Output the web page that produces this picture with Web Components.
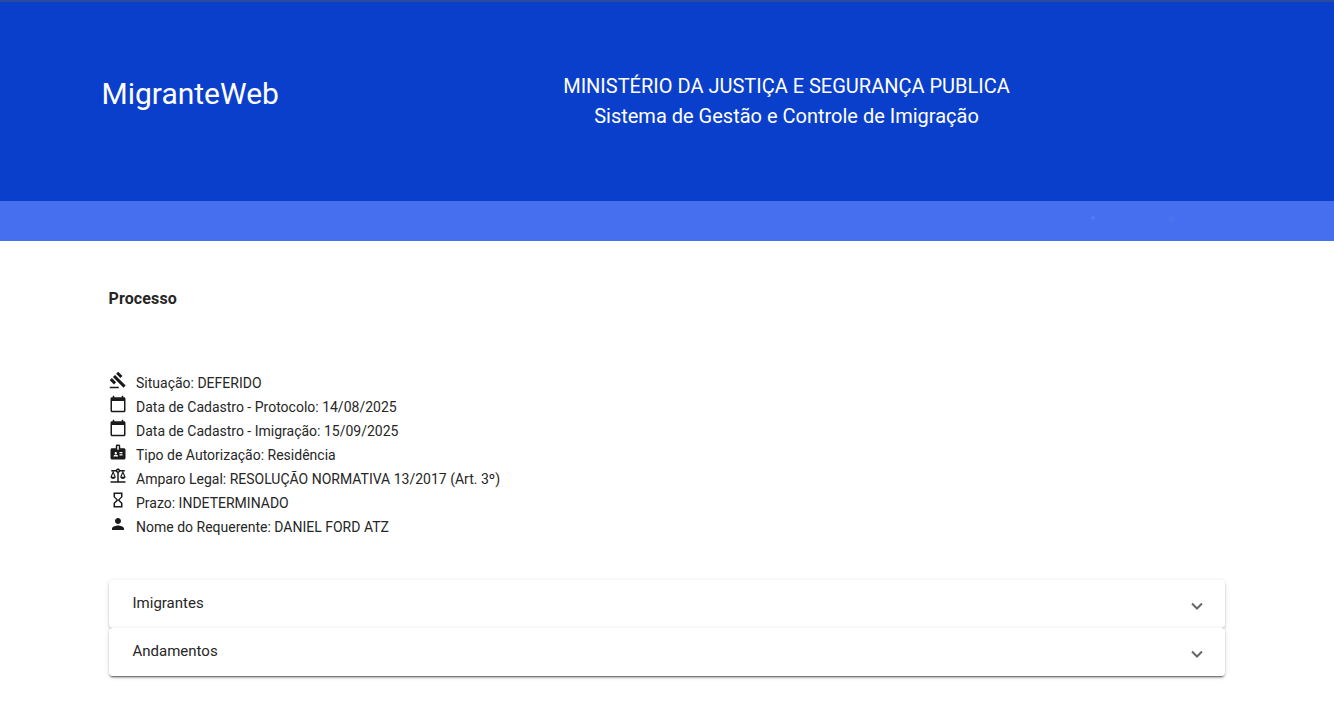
<!DOCTYPE html>
<html lang="pt-BR">
<head>
<meta charset="utf-8">
<title>MigranteWeb</title>
<style>
    html, body { margin: 0; padding: 0; background: #fff; }
    body { font-family: Roboto, "Liberation Sans", sans-serif; color: rgba(0,0,0,.87); }
</style>
</head>
<body>
<app-header title-text="MigranteWeb" line1="MINISTÉRIO DA JUSTIÇA E SEGURANÇA PUBLICA" line2="Sistema de Gestão e Controle de Imigração"></app-header>
<process-view heading="Processo">
    <info-row icon="gavel">Situação: DEFERIDO</info-row>
    <info-row icon="calendar">Data de Cadastro - Protocolo: 14/08/2025</info-row>
    <info-row icon="calendar">Data de Cadastro - Imigração: 15/09/2025</info-row>
    <info-row icon="badge">Tipo de Autorização: Residência</info-row>
    <info-row icon="balance">Amparo Legal: RESOLUÇÃO NORMATIVA 13/2017 (Art. 3º)</info-row>
    <info-row icon="hourglass">Prazo: INDETERMINADO</info-row>
    <info-row icon="person">Nome do Requerente: DANIEL FORD ATZ</info-row>
    <expansion-panels slot="panels">
        <expansion-panel label="Imigrantes"></expansion-panel>
        <expansion-panel label="Andamentos"></expansion-panel>
    </expansion-panels>
</process-view>

<script>
const ICONS = {
    gavel: 'M1 21h12v2H1zM5.245 8.07l2.83-2.827 14.14 14.142-2.828 2.828zM12.317 1l5.657 5.656-2.83 2.83-5.654-5.66zM3.825 9.485l5.657 5.657-2.828 2.828-5.657-5.657z',
    calendar: 'M20 3h-1V1h-2v2H7V1H5v2H4c-1.1 0-2 .9-2 2v16c0 1.1.9 2 2 2h16c1.1 0 2-.9 2-2V5c0-1.1-.9-2-2-2zm0 18H4V8h16v13z',
    badge: 'M20 7h-5V4c0-1.1-.9-2-2-2h-2c-1.1 0-2 .9-2 2v3H4c-1.1 0-2 .9-2 2v11c0 1.1.9 2 2 2h16c1.1 0 2-.9 2-2V9c0-1.1-.9-2-2-2zM9 12c.83 0 1.5.67 1.5 1.5S9.83 15 9 15s-1.5-.67-1.5-1.5S8.17 12 9 12zm3 6H6v-.75c0-1 2-1.5 3-1.5s3 .5 3 1.5V18zm1-9h-2V4h2v5zm5 7.5h-4V15h4v1.5zm0-3h-4V12h4v1.5z',
    balance: 'M13 7.83c.85-.3 1.53-.98 1.83-1.83H18l-3 7c0 1.66 1.57 3 3.5 3s3.5-1.34 3.5-3l-3-7h2V4h-6.17c-.41-1.17-1.52-2-2.83-2s-2.42.83-2.83 2H3v2h2l-3 7c0 1.66 1.57 3 3.5 3S9 14.66 9 13L6 6h3.17c.3.85.98 1.53 1.83 1.83V19H2v2h20v-2h-9V7.83zM20.37 13h-3.74l1.87-4.36L20.37 13zm-13 0H3.63L5.5 8.64 7.37 13zM12 6c-.55 0-1-.45-1-1s.45-1 1-1 1 .45 1 1-.45 1-1 1z',
    hourglass: 'M6 2v6h.01L6 8.01 10 12l-4 4 .01.01H6V22h12v-5.99h-.01L18 16l-4-4 4-3.99-.01-.01H18V2H6zm10 14.5V20H8v-3.5l4-4 4 4zm-4-5l-4-4V4h8v3.5l-4 4z',
    person: 'M12 12c2.21 0 4-1.79 4-4s-1.79-4-4-4-4 1.79-4 4 1.79 4 4 4zm0 2c-2.67 0-8 1.34-8 4v2h16v-2c0-2.66-5.33-4-8-4z'
};

class AppHeader extends HTMLElement {
    connectedCallback() {
        const shadow = this.attachShadow({mode: "open"});
        shadow.innerHTML = `
            <style>
                :host { display: block; color: #fff; }
                .top {
                    height: 201px;
                    box-sizing: border-box;
                    background: #0a3fcb;
                    border-top: 2px solid #2b4a9e;
                    display: flex;
                    padding: 66px 0 0 101.5px;
                }
                .brand { width: 461.5px; font-size: 30px; line-height: 52px; }
                .titles { font-size: 20px; line-height: 30px; text-align: center; width: 447px; margin-top: 3px; }
                .band {
                    height: 40px;
                    background:
                        radial-gradient(circle 3px at 1093px 17px, #5681f3, transparent),
                        radial-gradient(circle 4px at 1171px 18px, #4c77f0, transparent),
                        #456fee;
                }
            </style>
            <div class="top">
                <div class="brand">${this.getAttribute('title-text')}</div>
                <div class="titles">
                    <div>${this.getAttribute('line1')}</div>
                    <div>${this.getAttribute('line2')}</div>
                </div>
            </div>
            <div class="band"></div>
        `;
    }
}

class ProcessView extends HTMLElement {
    connectedCallback() {
        const shadow = this.attachShadow({mode: "open"});
        shadow.innerHTML = `
            <style>
                :host { display: block; padding: 48px 108px 28px 108.5px; }
                h2 { margin: 0 0 63px; font-size: 16px; line-height: 20px; font-weight: 700; color: #262626; letter-spacing: .12px; }
                .rows { display: flex; flex-direction: column; margin-bottom: 40px; }
            </style>
            <h2>${this.getAttribute('heading')}</h2>
            <div class="rows"><slot></slot></div>
            <slot name="panels"></slot>
        `;
    }
}

class InfoRow extends HTMLElement {
    connectedCallback() {
        const shadow = this.attachShadow({mode: "open"});
        shadow.innerHTML = `
            <style>
                :host { display: flex; height: 24px; gap: 9.5px; font-size: 14px; line-height: 22px; color: #262626; }
                svg { width: 18px; height: 18px; margin-top: -1px; fill: #1a1a1a; flex: none; }
            </style>
            <svg viewBox="0 0 24 24"><path d="${ICONS[this.getAttribute('icon')]}"/></svg>
            <span><slot></slot></span>
        `;
    }
}

class ExpansionPanels extends HTMLElement {
    connectedCallback() {
        const shadow = this.attachShadow({mode: "open"});
        shadow.innerHTML = `
            <style>
                :host {
                    display: block;
                    width: 1116.5px;
                    border-radius: 4px;
                    box-shadow: 0 2px 2px -1px rgba(0,0,0,.35);
                }
            </style>
            <slot></slot>
        `;
    }
}

class ExpansionPanel extends HTMLElement {
    connectedCallback() {
        const shadow = this.attachShadow({mode: "open"});
        shadow.innerHTML = `
            <style>
                :host {
                    display: flex;
                    align-items: center;
                    justify-content: space-between;
                    height: 48px;
                    box-sizing: border-box;
                    padding: 0 22.5px 0 24px;
                    background: #fff;
                    font-size: 15px;
                    color: #262626;
                    border-radius: 4px;
                    box-shadow: 0 3px 1px -2px rgba(0,0,0,.2), 0 2px 2px 0 rgba(0,0,0,.14), 0 1px 5px 0 rgba(0,0,0,.12);
                }
                span { margin-top: -2px; }
                svg { width: 12px; height: 8px; margin: 4px 0 0; }
            </style>
            <span>${this.getAttribute('label')}</span>
            <svg viewBox="0 0 12 8"><path d="M1 1.5l5 5 5-5" fill="none" stroke="#666" stroke-width="2"/></svg>
        `;
    }
}

customElements.define('app-header', AppHeader);
customElements.define('process-view', ProcessView);
customElements.define('info-row', InfoRow);
customElements.define('expansion-panels', ExpansionPanels);
customElements.define('expansion-panel', ExpansionPanel);
</script>
</body>
</html>
